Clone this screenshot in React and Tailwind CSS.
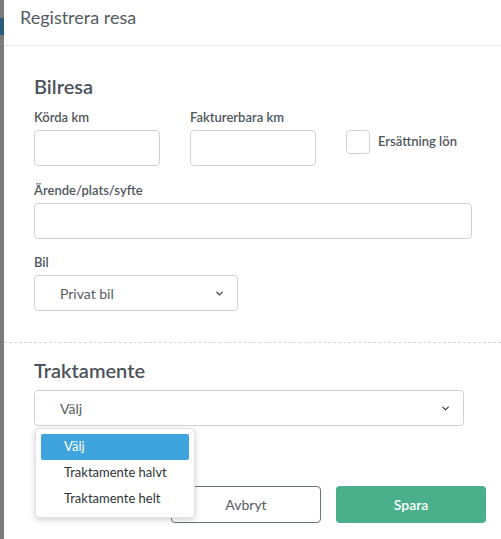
import { ChevronDown } from "lucide-react";

function Field({ label, className = "", children }) {
  return (
    <div className={className}>
      <label className="block text-[13px] leading-[19px] font-semibold text-[#4f575e] mb-[3px]">{label}</label>
      {children}
    </div>
  );
}

function Select({ value, className = "" }) {
  return (
    <div className={`h-[36px] border border-[#cfd3d8] rounded-[4px] flex items-center justify-between pl-[25px] pr-[12px] text-[14px] text-[#555c63] bg-white ${className}`}>
      <span>{value}</span>
      <ChevronDown className="w-[11px] h-[11px] text-[#333]" strokeWidth={2.5} />
    </div>
  );
}

export default function App() {
  return (
    <div className="w-[501px] h-[539px] flex bg-[#7b7b7b] overflow-hidden" style={{ fontFamily: "Lato, 'Open Sans', sans-serif" }}>
      <div className="w-[4px] flex flex-col shrink-0">
        <div className="h-[18px]" />
        <div className="h-[17px] bg-[#2a5b7c]" />
      </div>
      <div className="flex-1 bg-white flex flex-col">
        <div className="h-[46px] shrink-0 border-b border-[#e6e6e6] pl-[16px] pt-[4px]">
          <h1 className="text-[18px] text-[#535b62] font-normal">Registrera resa</h1>
        </div>

        <div className="pl-[30px] pr-[28px] pt-[30px] shrink-0">
          <h2 className="text-[20px] text-[#4b5259] font-semibold leading-none mb-[12px]">Bilresa</h2>
          <div className="flex gap-[30px] items-start">
            <Field label="Körda km">
              <div className="w-[126px] h-[36px] border border-[#cfd3d8] rounded-[4px]" />
            </Field>
            <Field label="Fakturerbara km">
              <div className="w-[126px] h-[36px] border border-[#cfd3d8] rounded-[4px]" />
            </Field>
            <div className="flex items-center gap-[8px] pt-[22px]">
              <div className="w-[24px] h-[24px] border border-[#cfd3d8] rounded-[4px]" />
              <span className="text-[13px] font-semibold text-[#4f575e]">Ersättning lön</span>
            </div>
          </div>

          <Field label="Ärende/plats/syfte" className="mt-[15px]">
            <div className="w-[438px] h-[36px] border border-[#cfd3d8] rounded-[4px]" />
          </Field>

          <Field label="Bil" className="mt-[14px]">
            <Select value="Privat bil" className="w-[204px]" />
          </Field>
        </div>

        <div className="mt-[31px] border-t border-dashed border-[#d8d8d8] shrink-0" />

        <div className="pl-[30px] pr-[37px] pt-[17px] relative">
          <h2 className="text-[20px] text-[#4b5259] font-semibold leading-none mb-[10px]">Traktamente</h2>
          <Select value="Välj" />

          <div className="flex justify-end gap-[15px] mt-[60px] mr-[-22px]">
            <button className="w-[150px] h-[37px] border border-[#6c747b] rounded-[4px] text-[14px] text-[#555c63] bg-white">Avbryt</button>
            <button className="w-[150px] h-[37px] rounded-[4px] text-[14px] font-semibold text-white bg-[#4aaf8b]">Spara</button>
          </div>

          <div className="absolute left-[31px] top-[85px] w-[160px] bg-white rounded-[4px] border border-[#e2e2e2] shadow-[0_2px_6px_rgba(0,0,0,0.18)] p-[5px]">
            <div className="h-[26px] rounded-[2px] bg-[#3fa4dd] text-white text-[13px] flex items-center pl-[23px]">Välj</div>
            <div className="h-[26px] text-[#2d3338] text-[13px] flex items-center pl-[23px]">Traktamente halvt</div>
            <div className="h-[26px] text-[#2d3338] text-[13px] flex items-center pl-[23px]">Traktamente helt</div>
          </div>
        </div>
      </div>
    </div>
  );
}
